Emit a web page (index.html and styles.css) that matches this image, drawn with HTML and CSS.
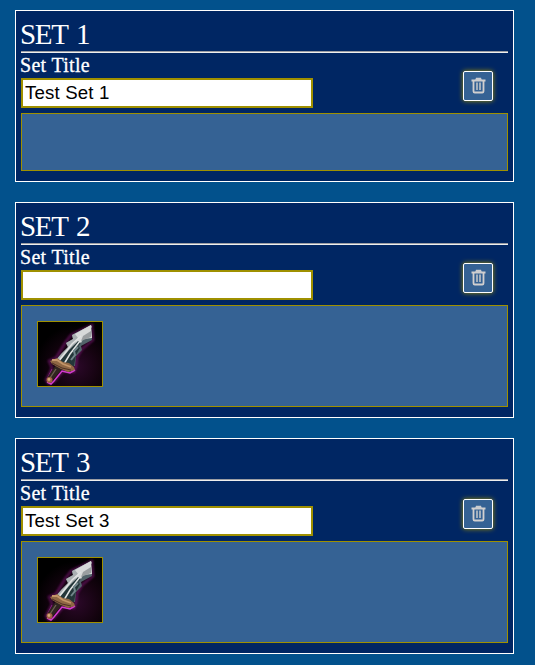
FILE: index.html
```html
<!DOCTYPE html>
<html lang="en">
<head>
<meta charset="utf-8">
<title>Item Sets</title>
<link rel="stylesheet" href="styles.css">
</head>
<body>
<svg class="defs" aria-hidden="true">
  <defs>
    <radialGradient id="night" cx="60%" cy="70%" r="65%"><stop stop-color="#2b0829"/><stop offset=".55" stop-color="#14030f"/><stop offset="1" stop-color="#000"/></radialGradient>
    <filter id="soft" x="-30%" y="-30%" width="160%" height="160%"><feGaussianBlur stdDeviation="1.3"/></filter>
  </defs>
  <symbol id="sword" viewBox="0 0 64 64">
    <rect width="64" height="64" fill="url(#night)"/>
    <path d="M54 3 55 18 44 27 39 35 38 44 36 50 25 49 16 60 11 62 8 58 14 46 11 39 18 36 27 21 33 13Z" fill="none" stroke="#a01c99" stroke-width="2.5" opacity=".45" filter="url(#soft)"/>
    <path d="M37 48 32 51 24 49 16 59 13 62 9 60" fill="none" stroke="#d43bd0" stroke-width="1.5"/>
    <path d="M9 57 14 47" stroke="#8d2387" fill="none"/>
    <path d="M53 3 34 13 35 17 28 21 30 25 24 31 17 39 28 44 37 44 38 34 44 28 43 24 54 18Z" fill="#52636a"/>
    <path d="M53 3 34 13 35 17 28 21 30 25 24 31 17 39 23 41 39 21 54 5Z" fill="#a9afb1"/>
    <path d="M53 3 37 12 40 16 35 25 43 21 45 17 54 16Z" fill="#d7d9d9"/>
    <path d="M40 19 31 28 21 40 28 44 36 44 38 33 42 26 40 24 43 21Z" fill="#233639"/>
    <path d="M43 14 34 22 20 40M42 19 32 32 26 42" fill="none" stroke="#e0e3e2" stroke-width="1.5"/>
    <path d="M45 14 53 9 53 15 43 19Z" fill="#9a9ea0"/>
    <path d="M40 25 36 29 37 33 33 38" fill="none" stroke="#71868b" stroke-width="2"/>
    <path d="m18 43 6 4-10 12-5-3Z" fill="#302420"/>
    <path d="m18 47-6 9" stroke="#6d6352" stroke-width="1.3"/>
    <path d="m12 39 7-3 6 4 6 1 5 4 1 3-7 2-7-3-9-5Z" fill="#8f6744"/>
    <path d="m14 38 5 0 6 4 8 3" fill="none" stroke="#c49669" stroke-width="1.8"/>
    <path d="m14 41 10 5 9 2" fill="none" stroke="#4d3025"/>
    <circle cx="11.5" cy="58" r="3" fill="#9f6145"/><circle cx="11" cy="57.5" r="1.4" fill="#d3aa78"/>
  </symbol>
  <symbol id="trash" viewBox="0 0 15 17">
    <path d="M.5 3.5H14.5M2.5 4V14.2Q2.5 15.5 3.8 15.5H11.2Q12.5 15.5 12.5 14.2V4" fill="none" stroke="#d2d0cf" stroke-width="1.8"/>
    <path d="M6 5.5V13M9 5.5V13" stroke="#d2d0cf" stroke-width="1.4"/>
    <path d="M5 .8H10L11 3.5H4Z" fill="#c8cbd0"/>
  </symbol>
</svg>
<main class="sets">
  <section class="set">
    <h2>SET 1</h2><hr>
    <div class="controls">
      <label>Set Title<input type="text" value="Test Set 1"></label>
      <button type="button" aria-label="Delete set"><svg><use href="#trash"/></svg></button>
    </div>
    <div class="items"></div>
  </section>
  <section class="set">
    <h2>SET 2</h2><hr>
    <div class="controls">
      <label>Set Title<input type="text" value=""></label>
      <button type="button" aria-label="Delete set"><svg><use href="#trash"/></svg></button>
    </div>
    <div class="items filled"><svg class="item"><use href="#sword"/></svg></div>
  </section>
  <section class="set">
    <h2>SET 3</h2><hr>
    <div class="controls">
      <label>Set Title<input type="text" value="Test Set 3"></label>
      <button type="button" aria-label="Delete set"><svg><use href="#trash"/></svg></button>
    </div>
    <div class="items filled"><svg class="item"><use href="#sword"/></svg></div>
  </section>
</main>
</body>
</html>
```
FILE: styles.css
```css
* { box-sizing: border-box; }
body {
  margin: 0;
  height: 665px;
  overflow: hidden;
  background: #02518c;
  color: #fff;
  font-family: "Liberation Serif", serif;
}
.defs { display: block; width: 0; height: 0; }
.sets {
  display: flex;
  flex-direction: column;
  gap: 20px;
  width: 499px;
  margin: 10px 0 0 15px;
}
.set {
  padding: 0 5px 10px;
  border: 1px solid #fff;
  background: #002663;
}
h2 {
  height: 40px;
  margin: 0 0 0 -1px;
  padding-top: 7px;
  font-size: 29px;
  font-weight: 400;
  line-height: 32px;
  letter-spacing: -1.3px;
  word-spacing: 3px;
}
hr {
  height: 2px;
  margin: 0;
  border: 0;
  border-top: 1px solid #9b9da3;
  background: #eee;
}
.controls {
  display: flex;
  justify-content: space-between;
  height: 55px;
  padding-right: 15px;
}
label {
  display: block;
  text-indent: -1px;
  font-size: 20px;
  line-height: 25px;
  letter-spacing: .3px;
  -webkit-text-stroke: .3px #fff;
}
input {
  display: block;
  width: 292px;
  height: 30px;
  padding: 1px 2px;
  border: 2px solid #9f9000;
  border-radius: 0;
  outline: 0;
  background: #fff;
  color: #000;
  font: 18.67px "Liberation Sans", Arial, sans-serif;
  letter-spacing: .15px;
  -webkit-text-stroke: 0;
}
button {
  display: grid;
  place-items: center;
  width: 30px;
  height: 30px;
  margin-top: 18px;
  padding: 0 0 2px;
  border: 1px solid #fff;
  border-radius: 2px;
  background: #356294;
  box-shadow: 0 0 5px #9f9000;
}
button svg { width: 15px; height: 17px; }
.items {
  height: 58px;
  margin-top: 5px;
  border: 1px solid #9f9000;
  background: #356294;
}
.filled { height: 102px; padding: 15px; }
.item {
  display: block;
  width: 66px;
  height: 66px;
  border: 1px solid #9f9000;
}
```
